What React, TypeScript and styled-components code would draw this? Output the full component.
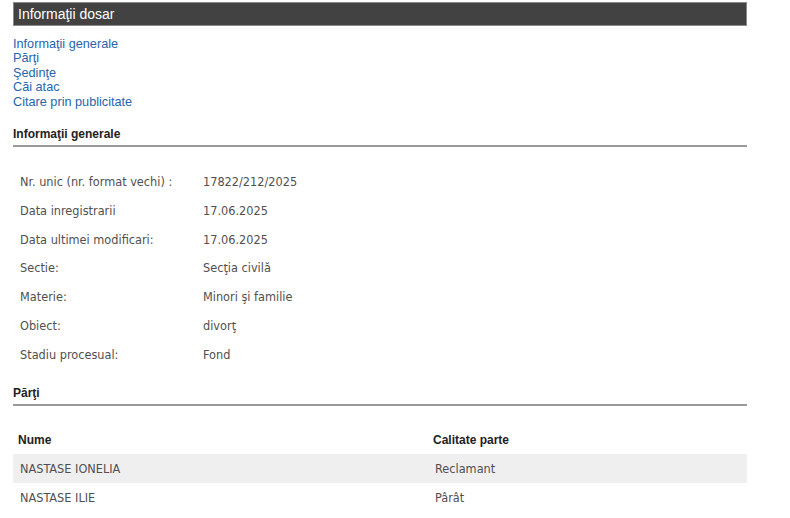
import { Fragment } from 'react'
import styled, { createGlobalStyle } from 'styled-components'

const GlobalStyle = createGlobalStyle`
  body {
    margin: 0;
    background: #fff;
    font-family: 'Liberation Sans', Arial, sans-serif;
  }
`

const Page = styled.div`
  width: 734px;
  margin-left: 13px;
  padding-top: 2px;
`

const TitleBar = styled.div`
  height: 22px;
  line-height: 22px;
  background: #424242;
  border: 1px solid #8a8a8a;
  color: #fff;
  font-size: 14px;
  padding-left: 4px;
`

const Nav = styled.nav`
  display: flex;
  flex-direction: column;
  padding-top: 11px;
`

const NavLink = styled.a`
  color: #2566ad;
  font-size: 12.7px;
  line-height: 14.4px;
  text-decoration: none;
  width: fit-content;
`

const SectionTitle = styled.h2<{ $top: number }>`
  margin: ${(p) => p.$top}px 0 0;
  font-size: 12px;
  font-weight: bold;
  color: #222;
  line-height: 14px;
  padding-bottom: 4px;
  border-bottom: 2px solid #999;
`

const InfoGrid = styled.div`
  display: grid;
  grid-template-columns: 183px 1fr;
  grid-auto-rows: 28.85px;
  align-items: center;
  padding: 20px 0 0 7px;
  font-family: 'DejaVu Sans Condensed', Tahoma, sans-serif;
  font-size: 12.6px;
  color: #505050;
`

const PartiesTable = styled.table`
  width: 100%;
  border-collapse: collapse;
  margin-top: 20px;
`

const HeadCell = styled.th<{ $width?: number }>`
  text-align: left;
  font-size: 12px;
  font-weight: bold;
  color: #222;
  height: 28px;
  padding: 0 0 0 5px;
  width: ${(p) => (p.$width ? `${p.$width}px` : 'auto')};
`

const Row = styled.tr<{ $shaded?: boolean }>`
  background: ${(p) => (p.$shaded ? '#efeff0' : 'transparent')};
`

const Cell = styled.td`
  height: 29px;
  padding: 0 0 0 7px;
  font-family: 'DejaVu Sans Condensed', Tahoma, sans-serif;
  font-size: 12.6px;
  color: #505050;
`

const links = [
  'Informaţii generale',
  'Părţi',
  'Şedinţe',
  'Căi atac',
  'Citare prin publicitate',
]

const info: [string, string][] = [
  ['Nr. unic (nr. format vechi) :', '17822/212/2025'],
  ['Data inregistrarii', '17.06.2025'],
  ['Data ultimei modificari:', '17.06.2025'],
  ['Sectie:', 'Secţia civilă'],
  ['Materie:', 'Minori şi familie'],
  ['Obiect:', 'divorţ'],
  ['Stadiu procesual:', 'Fond'],
]

const parties = [
  { name: 'NASTASE IONELIA', role: 'Reclamant' },
  { name: 'NASTASE ILIE', role: 'Pârât' },
]

export default function App() {
  return (
    <>
      <GlobalStyle />
      <Page>
        <TitleBar>Informaţii dosar</TitleBar>
        <Nav>
          {links.map((l) => (
            <NavLink key={l} href="#">
              {l}
            </NavLink>
          ))}
        </Nav>
        <SectionTitle $top={18}>Informaţii generale</SectionTitle>
        <InfoGrid>
          {info.map(([k, v]) => (
            <Fragment key={k}>
              <span>{k}</span>
              <span>{v}</span>
            </Fragment>
          ))}
        </InfoGrid>
        <SectionTitle $top={17}>Părţi</SectionTitle>
        <PartiesTable>
          <thead>
            <tr>
              <HeadCell $width={410}>Nume</HeadCell>
              <HeadCell>Calitate parte</HeadCell>
            </tr>
          </thead>
          <tbody>
            {parties.map((p, i) => (
              <Row key={p.name} $shaded={i === 0}>
                <Cell>{p.name}</Cell>
                <Cell>{p.role}</Cell>
              </Row>
            ))}
          </tbody>
        </PartiesTable>
      </Page>
    </>
  )
}
